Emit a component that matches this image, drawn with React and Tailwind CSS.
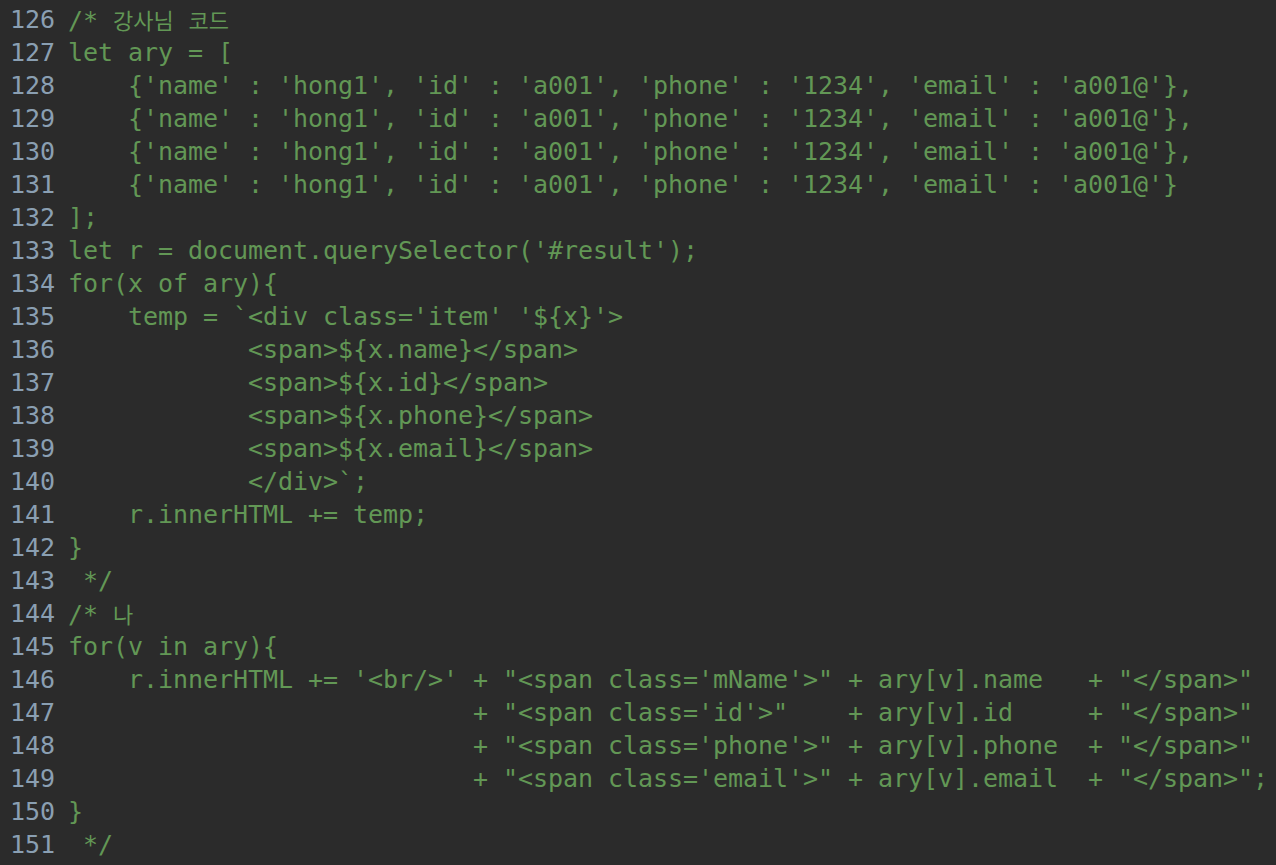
import React from 'react';

const K = ({ children }) => (
  <span className="text-[22px]" style={{ fontFamily: '"Noto Sans CJK KR", sans-serif' }}>
    {children}
  </span>
);

const lines = [
  [126, <>/* <K>강사님</K> <K>코드</K></>],
  [127, 'let ary = ['],
  [128, "    {'name' : 'hong1', 'id' : 'a001', 'phone' : '1234', 'email' : 'a001@'},"],
  [129, "    {'name' : 'hong1', 'id' : 'a001', 'phone' : '1234', 'email' : 'a001@'},"],
  [130, "    {'name' : 'hong1', 'id' : 'a001', 'phone' : '1234', 'email' : 'a001@'},"],
  [131, "    {'name' : 'hong1', 'id' : 'a001', 'phone' : '1234', 'email' : 'a001@'}"],
  [132, '];'],
  [133, "let r = document.querySelector('#result');"],
  [134, 'for(x of ary){'],
  [135, "    temp = `<div class='item' '${x}'>"],
  [136, '            <span>${x.name}</span>'],
  [137, '            <span>${x.id}</span>'],
  [138, '            <span>${x.phone}</span>'],
  [139, '            <span>${x.email}</span>'],
  [140, '            </div>`;'],
  [141, '    r.innerHTML += temp;'],
  [142, '}'],
  [143, ' */'],
  [144, <>/* <K>나</K></>],
  [145, 'for(v in ary){'],
  [146, `    r.innerHTML += '<br/>' + "<span class='mName'>" + ary[v].name   + "</span>"`],
  [147, `                           + "<span class='id'>"    + ary[v].id     + "</span>"`],
  [148, `                           + "<span class='phone'>" + ary[v].phone  + "</span>"`],
  [149, `                           + "<span class='email'>" + ary[v].email  + "</span>";`],
  [150, '}'],
  [151, ' */'],
];

export default function App() {
  return (
    <div
      className="w-[1276px] h-[865px] overflow-hidden bg-[#2b2b2b] pt-[3px] pl-[10px] text-[25px] tracking-[-0.05px]"
      style={{ fontFamily: '"DejaVu Sans Mono", monospace' }}
    >
      {lines.map(([n, code]) => (
        <div key={n} className="flex h-[33px] leading-[33px] whitespace-pre">
          <span className="w-[58px] shrink-0 text-[#8a9fb2]">{n}</span>
          <span className="text-[#629755]">{code}</span>
        </div>
      ))}
    </div>
  );
}
